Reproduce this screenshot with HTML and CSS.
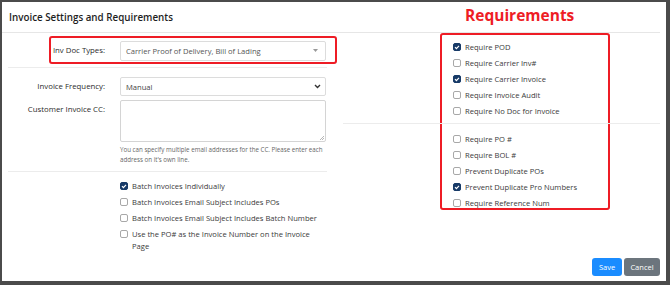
FILE: index.html
```html
<!DOCTYPE html>
<html lang="en">
<head>
    <meta charset="UTF-8">
    <title>Invoice Settings and Requirements</title>
    <link rel="stylesheet" href="styles.css">
</head>
<body>

<div class="modal">
    <div class="modal_header">
        <h1 class="title">Invoice Settings and Requirements</h1>
        <div class="req_title">Requirements</div>
    </div>

    <div class="modal_body">
        <div class="col_left">
            <div class="form_row highlight">
                <label class="label label_short">Inv Doc Types:</label>
                <div class="select">
                    <span>Carrier Proof of Delivery, Bill of Lading</span>
                    <svg class="caret" width="5" height="3" viewBox="0 0 5 3"><path d="M0 0h5L2.5 3z" fill="#999"/></svg>
                </div>
            </div>
            <div class="divider"></div>

            <div class="form_row row_freq">
                <label class="label">Invoice Frequency:</label>
                <div class="select select_small">
                    <span>Manual</span>
                    <svg class="chevron" width="7" height="5" viewBox="0 0 7 5"><path d="M1 1l2.5 2.5L6 1" fill="none" stroke="#333" stroke-width="1.4"/></svg>
                </div>
            </div>
            <div class="form_row row_cc">
                <label class="label">Customer Invoice CC:</label>
                <div class="textarea">
                    <svg class="grip" width="5" height="5" viewBox="0 0 5 5"><path d="M5 1L1 5M5 3L3 5" stroke="#999" stroke-width="0.7"/></svg>
                </div>
            </div>
            <p class="help">You can specify multiple email addresses for the CC. Please enter each address on it's own line.</p>
            <div class="divider"></div>

            <ul class="checks checks_left">
                <li><span class="cb checked"></span><span>Batch Invoices Individually</span></li>
                <li><span class="cb"></span><span>Batch Invoices Email Subject Includes POs</span></li>
                <li><span class="cb"></span><span>Batch Invoices Email Subject Includes Batch Number</span></li>
                <li><span class="cb"></span><span>Use the PO# as the Invoice Number on the Invoice Page</span></li>
            </ul>
        </div>

        <div class="col_right">
            <div class="req_box">
                <ul class="checks">
                    <li><span class="cb checked"></span><span>Require POD</span></li>
                    <li><span class="cb"></span><span>Require Carrier Inv#</span></li>
                    <li><span class="cb checked"></span><span>Require Carrier Invoice</span></li>
                    <li><span class="cb"></span><span>Require Invoice Audit</span></li>
                    <li><span class="cb"></span><span>Require No Doc for Invoice</span></li>
                </ul>
                <div class="divider divider_right"></div>
                <ul class="checks">
                    <li><span class="cb"></span><span>Require PO #</span></li>
                    <li><span class="cb"></span><span>Require BOL #</span></li>
                    <li><span class="cb"></span><span>Prevent Duplicate POs</span></li>
                    <li><span class="cb checked"></span><span>Prevent Duplicate Pro Numbers</span></li>
                    <li><span class="cb"></span><span>Require Reference Num</span></li>
                </ul>
            </div>
        </div>
    </div>

    <div class="modal_footer">
        <button class="btn btn_save">Save</button>
        <button class="btn btn_cancel">Cancel</button>
    </div>
</div>

</body>
</html>
```

FILE: styles.css
```css
body{
    margin: 0;
    width: 670px;
    height: 285px;
    overflow: hidden;
    background: #4b4b4b;
    font-family: "Open Sans", "Liberation Sans", sans-serif;
    color: #333;
}
ul{
    margin: 0;
    padding: 0;
}
li{
    list-style: none;
}
.modal{
    box-sizing: border-box;
    display: flex;
    flex-direction: column;
    width: 664px;
    height: 279px;
    margin: 2px 0 0 2px;
    background: #fff;
}
.modal_header{
    flex: none;
    display: flex;
    align-items: center;
    box-sizing: border-box;
    height: 31px;
    margin-right: 6px;
    border-bottom: 1px solid #e6e6e6;
}
.title{
    width: 456px;
    margin: 0;
    padding: 1px 0 0 7px;
    font-size: 9.8px;
    font-weight: 600;
    color: #1e1e1e;
}
.req_title{
    font-size: 15.5px;
    font-weight: 700;
    color: #ee1c25;
    padding-bottom: 4px;
}
.modal_body{
    flex: none;
    display: flex;
    padding: 0 6px;
}
.col_left{
    width: 322px;
}
.col_right{
    width: 320px;
    margin-left: 10px;
}
.form_row{
    display: flex;
    align-items: flex-start;
}
.label{
    box-sizing: border-box;
    width: 112px;
    padding-right: 15px;
    text-align: right;
    font-size: 7.8px;
    line-height: 19px;
    color: #2b2b2b;
}
.highlight{
    box-sizing: border-box;
    align-items: center;
    width: 288px;
    height: 28px;
    margin: 3px 0 0 41px;
    padding-top: 1px;
    border: 2px solid #ee1c25;
    border-radius: 3px;
}
.label_short{
    width: 69px;
}
.select{
    box-sizing: border-box;
    display: flex;
    align-items: center;
    justify-content: space-between;
    width: 206px;
    height: 20px;
    padding: 0 7px 0 5px;
    border: 1px solid #dcdcdc;
    border-radius: 2px;
    font-size: 7.6px;
    color: #555;
}
.select_small{
    height: 19px;
    padding-right: 4px;
    color: #444;
}
.divider{
    width: 319px;
    height: 1px;
    margin-top: 3px;
    background: #ececec;
}
.row_freq{
    margin-top: 9px;
}
.row_cc{
    margin-top: 4px;
}
.textarea{
    position: relative;
    box-sizing: border-box;
    width: 206px;
    height: 42px;
    border: 1px solid #d4d4d4;
    border-radius: 2px;
}
.grip{
    position: absolute;
    right: 1px;
    bottom: 1px;
}
.help{
    width: 206px;
    margin: 3px 0 7px 112px;
    font-size: 6.2px;
    line-height: 9.5px;
    color: #666;
}
.checks li{
    display: flex;
    align-items: flex-start;
    margin-bottom: 4px;
    font-size: 7.6px;
    line-height: 12px;
    color: #3a3a3a;
}
.checks_left{
    width: 205px;
    margin: 8px 0 0 112px;
}
.cb{
    flex: none;
    box-sizing: border-box;
    width: 8px;
    height: 8px;
    margin: 2px 4px 0 0;
    border: 1px solid #a8a8a8;
    border-radius: 2px;
    background: #fff;
}
.cb.checked{
    border-color: #173a67;
    background: #173a67 url("data:image/svg+xml,%3Csvg xmlns='http://www.w3.org/2000/svg' viewBox='0 0 8 8'%3E%3Cpath d='M2 4.2l1.4 1.4L6 2.8' fill='none' stroke='%23fff' stroke-width='1.2'/%3E%3C/svg%3E") center/8px 8px no-repeat;
}
.req_box{
    box-sizing: border-box;
    width: 170px;
    height: 177px;
    margin-left: 100px;
    padding: 6px 0 0 11px;
    border: 2px solid #ee1c25;
    border-radius: 3px;
}
.divider_right{
    width: 317px;
    margin: 6px 0 9px -110px;
}
.modal_footer{
    flex: none;
    display: flex;
    justify-content: flex-end;
    gap: 2px;
    margin-top: auto;
    padding: 0 6px 5px 0;
}
.btn{
    height: 18px;
    padding: 0 5px;
    border: none;
    border-radius: 3px;
    font-family: "Open Sans", "Liberation Sans", sans-serif;
    font-size: 7.5px;
    color: #fff;
}
.btn_save{
    width: 30px;
    background: #1a8cff;
}
.btn_cancel{
    width: 36px;
    background: #6c757d;
}
```
